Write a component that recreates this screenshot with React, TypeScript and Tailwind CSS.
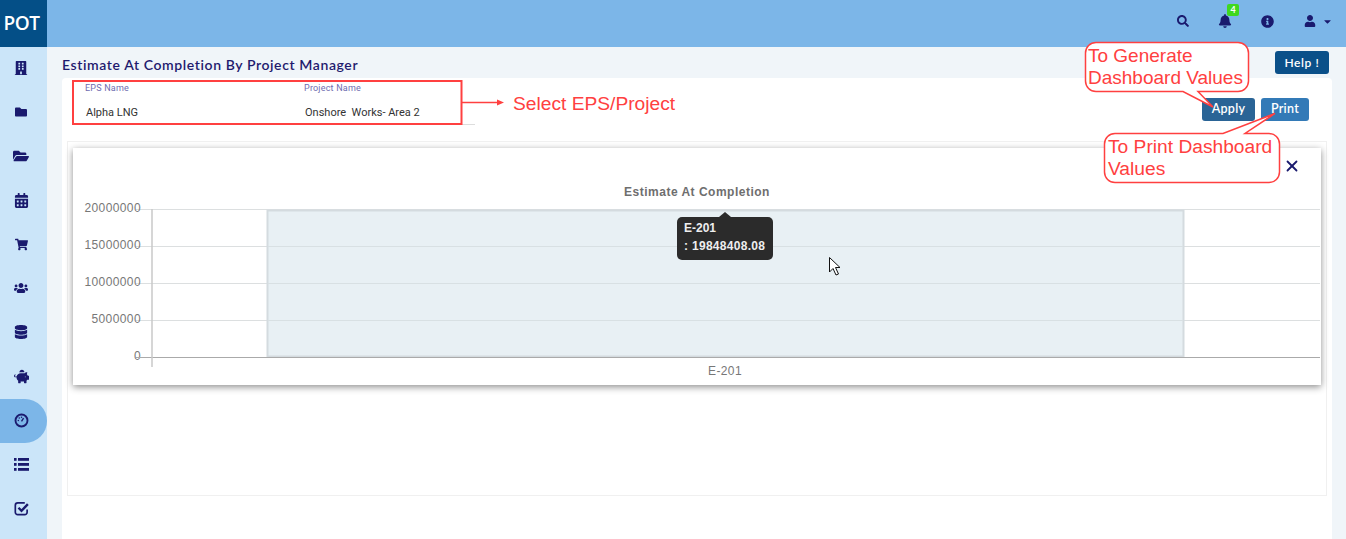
import { X } from 'lucide-react';
import type { ComponentType } from 'react';
import {
  FaBell,
  FaBuilding,
  FaCalendarAlt,
  FaCaretDown,
  FaDatabase,
  FaFolder,
  FaFolderOpen,
  FaInfoCircle,
  FaPiggyBank,
  FaSearch,
  FaShoppingCart,
  FaUser,
  FaUsers,
} from 'react-icons/fa';

function GaugeIcon({ className }: { className?: string }) {
  return (
    <svg viewBox="0 0 16 16" className={className} width="15" height="15" fill="none" stroke="currentColor">
      <circle cx="8" cy="8" r="6.4" strokeWidth="2" />
      <path d="M8 9L10.2 5.4" strokeWidth="1.4" />
      <circle cx="4.6" cy="8" r="0.8" fill="currentColor" stroke="none" />
      <circle cx="5.6" cy="5.4" r="0.8" fill="currentColor" stroke="none" />
      <circle cx="8" cy="4.4" r="0.8" fill="currentColor" stroke="none" />
    </svg>
  );
}

function CheckIcon({ className }: { className?: string }) {
  return (
    <svg viewBox="0 0 16 16" className={className} width="15" height="15" fill="none" stroke="currentColor">
      <path d="M11.5 2H4a2.6 2.6 0 0 0-2.6 2.6V12A2.6 2.6 0 0 0 4 14.6h7.4A2.6 2.6 0 0 0 14 12V9" strokeWidth="1.8" />
      <path d="M4.8 7.2L8 10.4L14.8 3.4" strokeWidth="2.6" />
    </svg>
  );
}

function ListIcon({ className }: { className?: string }) {
  return (
    <svg viewBox="0 0 15 13" className={className} width="15" height="13" fill="currentColor">
      <rect x="0" y="0" width="2.6" height="2.8" />
      <rect x="0" y="5" width="2.6" height="2.8" />
      <rect x="0" y="10" width="2.6" height="2.8" />
      <rect x="4" y="0" width="11" height="2.8" />
      <rect x="4" y="5" width="11" height="2.8" />
      <rect x="4" y="10" width="11" height="2.8" />
    </svg>
  );
}

const sideIcons: { Icon: ComponentType<{ className?: string }>; size: string }[] = [
  { Icon: FaBuilding, size: 'text-[14px]' },
  { Icon: FaFolder, size: 'text-[12px]' },
  { Icon: FaFolderOpen, size: 'text-[16px]' },
  { Icon: FaCalendarAlt, size: 'text-[15px]' },
  { Icon: FaShoppingCart, size: 'text-[13px]' },
  { Icon: FaUsers, size: 'text-[14px]' },
  { Icon: FaDatabase, size: 'text-[14px]' },
  { Icon: FaPiggyBank, size: 'text-[15px]' },
  { Icon: GaugeIcon, size: '' },
  { Icon: ListIcon, size: '' },
  { Icon: CheckIcon, size: '' },
];
const ACTIVE = 8;

const yTicks = [
  { label: '20000000', y: 209 },
  { label: '15000000', y: 246 },
  { label: '10000000', y: 283 },
  { label: '5000000', y: 320 },
  { label: '0', y: 357 },
];

function Sidebar() {
  return (
    <div className="flex w-[47px] shrink-0 flex-col bg-[#cbe5f9]">
      <div className="flex h-[47px] items-center justify-center pr-[4px] font-['Open_Sans',sans-serif] text-[19px] font-semibold tracking-[-0.4px] text-white bg-[#044f87]">
        POT
      </div>
      {sideIcons.map(({ Icon, size }, i) => (
        <div
          key={i}
          className={
            i === ACTIVE
              ? 'flex h-[44px] items-center justify-center rounded-r-[22px] bg-[#7cb6e8] pb-[2px] pr-[5px] text-[#1a1a6e]'
              : 'flex h-[44px] items-center justify-center pb-[2px] pr-[5px] text-[#1a1a6e]'
          }
        >
          <Icon className={size} />
        </div>
      ))}
    </div>
  );
}

function TopBar() {
  return (
    <div className="flex h-[47px] shrink-0 items-center justify-end bg-[#7cb6e8] pb-[5px] pr-[13px] text-[#1a1a6e]">
      <FaSearch className="mr-[29px] text-[12px]" />
      <div className="relative mr-[29px]">
        <FaBell className="text-[14px]" />
        <span className="absolute left-[9px] top-[-10px] flex h-[12px] w-[12px] items-center justify-center rounded-[2px] bg-[#3fd81f] font-['Lato',sans-serif] text-[9px] font-bold text-white">
          4
        </span>
      </div>
      <FaInfoCircle className="mr-[30px] text-[13px]" />
      <FaUser className="mr-[6px] text-[12px]" />
      <FaCaretDown className="text-[11px]" />
    </div>
  );
}

function Field({ label, value, width }: { label: string; value: string; width: string }) {
  return (
    <div className={width}>
      <div className="mt-[2px] font-['Roboto',sans-serif] text-[9px] leading-[11px] tracking-[0.2px] text-[#6f6db0]">{label}</div>
      <div className="mt-[12px] whitespace-pre pl-[1px] font-['Roboto',sans-serif] text-[11px] leading-[14px] text-[#333]">{value}</div>
    </div>
  );
}

function Chart() {
  return (
    <svg width="1248" height="237" viewBox="73 148 1248 237" className="block font-['Liberation_Sans',sans-serif]">
      <text x="697" y="196" textAnchor="middle" fontSize="12" fontWeight="700" letterSpacing="0.5" fill="#6e6e6e">
        Estimate At Completion
      </text>
      {yTicks.map((t) => (
        <g key={t.label}>
          <line x1="136" x2="1320" y1={t.y + 0.5} y2={t.y + 0.5} stroke={t.label === '0' ? '#aaa' : '#dcdfe0'} />
          <text x="141" y={t.y + 3} textAnchor="end" fontSize="12" letterSpacing="0.4" fill="#777">
            {t.label}
          </text>
        </g>
      ))}
      <rect x="267.5" y="210.5" width="916" height="146" fill="#e8f0f4" stroke="#d4dbdf" strokeWidth="2" />
      {yTicks.slice(1, 4).map((t) => (
        <line key={t.label} x1="268" x2="1183" y1={t.y + 0.5} y2={t.y + 0.5} stroke="#d8e0e3" />
      ))}
      <line x1="136" x2="1320" y1="357.5" y2="357.5" stroke="#aaa" />
      <line x1="152" x2="152" y1="209" y2="367" stroke="#c8c8c8" strokeWidth="1.5" />
      <text x="725" y="375" textAnchor="middle" fontSize="12" letterSpacing="0.4" fill="#777">
        E-201
      </text>
    </svg>
  );
}

function Annotations() {
  return (
    <svg
      width="1346"
      height="539"
      viewBox="0 0 1346 539"
      className="pointer-events-none absolute left-0 top-0 font-['Liberation_Sans',sans-serif]"
    >
      <rect x="73" y="81" width="388.5" height="43" fill="none" stroke="#ff4040" strokeWidth="2" />
      <path d="M462 102.5H500" stroke="#ff4040" strokeWidth="1.5" />
      <path d="M497 99.5L504 102.5L497 105.5Z" fill="#ff4040" />
      <text x="513" y="110" fontSize="19.2" fill="#ff4040">
        Select EPS/Project
      </text>

      <path
        d="M1096 42.5H1238a10.5 10.5 0 0 1 10.5 10.5V81a10.5 10.5 0 0 1-10.5 10.5H1198L1213 107L1183 91.5H1096a10.5 10.5 0 0 1-10.5-10.5V53a10.5 10.5 0 0 1 10.5-10.5Z"
        fill="#fff"
        stroke="#ff4040"
        strokeWidth="1.5"
      />
      <text fontSize="19" fill="#ff4040">
        <tspan x="1088" y="62">To Generate</tspan>
        <tspan x="1088" y="84">Dashboard Values</tspan>
      </text>

      <path
        d="M1115 133.5H1223L1275 113.5L1245 133.5H1269a10.5 10.5 0 0 1 10.5 10.5V172a10.5 10.5 0 0 1-10.5 10.5H1115a10.5 10.5 0 0 1-10.5-10.5V144a10.5 10.5 0 0 1 10.5-10.5Z"
        fill="#fff"
        stroke="#ff4040"
        strokeWidth="1.5"
      />
      <text fontSize="19.2" fill="#ff4040">
        <tspan x="1108" y="153">To Print Dashboard</tspan>
        <tspan x="1108" y="175">Values</tspan>
      </text>

      <path
        d="M829.5 257.5V272L833 268.5L836 275L838.5 274L835.5 267.5H840Z"
        fill="#fff"
        stroke="#111"
        strokeWidth="1"
      />
    </svg>
  );
}

export default function App() {
  return (
    <div className="relative flex h-[539px] w-full overflow-hidden bg-[#f0f5f9]">
      <Sidebar />
      <div className="flex min-w-0 flex-1 flex-col">
        <TopBar />
        <div className="flex h-[31px] shrink-0 items-start justify-between pl-[15px] pr-[17px]">
          <div className="mt-[10px] font-['Lato',sans-serif] text-[14px] font-semibold leading-[16px] tracking-[0.6px] text-[#1f1a6e]">
            Estimate At Completion By Project Manager
          </div>
          <button className="mt-[4px] h-[23px] w-[54px] rounded-[3px] bg-[#0b5089] font-['Lato',sans-serif] text-[12px] font-semibold tracking-[0.6px] text-white">
            Help !
          </button>
        </div>
        <div className="ml-[15px] mr-[14px] flex-1 rounded-t-[4px] bg-white">
          <div className="flex h-[63px] items-start">
            <div className="ml-[10px] mt-[3px] flex h-[44px] w-[403px] items-start border-b border-[#ddd] pl-[13px]">
              <Field label="EPS Name" value="Alpha LNG" width="w-[219px]" />
              <Field label="Project Name" value="Onshore  Works- Area 2" width="w-[170px]" />
            </div>
            <div className="ml-auto mr-[23px] mt-[20px] flex gap-[6px] font-['Lato',sans-serif] text-[12.5px] font-semibold tracking-[0.3px] text-white">
              <button className="h-[23px] w-[53px] rounded-[3px] bg-[#2a6496]">Apply</button>
              <button className="h-[23px] w-[48px] rounded-[3px] bg-[#337ab7]">Print</button>
            </div>
          </div>
          <div className="mx-[5px] h-[355px] border border-[#f0f0f0] px-[5px] pt-[6px]">
            <div className="relative h-[237px] bg-white shadow-[0_2px_7px_rgba(0,0,0,0.45)]">
              <Chart />
              <X size={18} strokeWidth={2.4} className="absolute right-[20px] top-[9px] text-[#1a1a6e]" />
              <div className="absolute left-[604px] top-[69px] h-[43px] w-[96px] whitespace-nowrap rounded-[5px] bg-[#2b2b2b] pl-[7px] pt-[2px] font-['Liberation_Sans',sans-serif] text-[12px] font-bold leading-[18px] text-[#eee]">
                <span className="absolute left-[42px] top-[-5px] h-0 w-0 border-x-[6px] border-b-[5px] border-x-transparent border-b-[#2b2b2b]" />
                <div>E-201</div>
                <div className="tracking-[0.3px]">: 19848408.08</div>
              </div>
            </div>
          </div>
        </div>
      </div>
      <Annotations />
    </div>
  );
}
